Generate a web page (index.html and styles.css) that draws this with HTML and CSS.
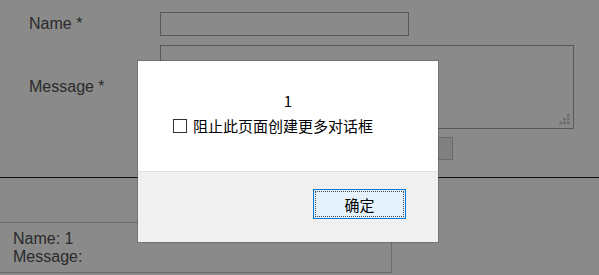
FILE: index.html
```html
<!DOCTYPE html>
<html lang="zh-CN">
<head>
<meta charset="utf-8">
<title>Form</title>
<link rel="stylesheet" href="styles.css">
</head>
<body>
<div class="form">
  <div class="row">
    <label class="label">Name *</label>
    <input class="field" type="text">
  </div>
  <div class="row row-msg">
    <label class="label">Message *</label>
    <div class="area-wrap">
      <textarea class="area"></textarea>
      <svg class="grip" width="12" height="12" viewBox="0 0 12 12">
        <rect x="8" y="0" width="2.6" height="2.6"/>
        <rect x="4.2" y="3.8" width="2.6" height="2.6"/>
        <rect x="8" y="3.8" width="2.6" height="2.6"/>
        <rect x="0.4" y="7.6" width="2.6" height="2.6"/>
        <rect x="4.2" y="7.6" width="2.6" height="2.6"/>
        <rect x="8" y="7.6" width="2.6" height="2.6"/>
      </svg>
    </div>
  </div>
  <div class="actions">
    <button class="submit" type="button">Send</button>
  </div>
</div>
<div class="rule"></div>
<div class="output">
  <div>Name: 1</div>
  <div>Message:</div>
</div>

<div class="dialog">
  <div class="dlg-body">
    <div class="dlg-msg">1</div>
    <div class="dlg-check">
      <span class="box"></span>
      <span>阻止此页面创建更多对话框</span>
    </div>
  </div>
  <div class="dlg-foot">
    <button class="ok" type="button">确定</button>
  </div>
</div>
</body>
</html>
```
FILE: styles.css
```css
html, body {
  margin: 0;
  padding: 0;
}
body {
  background: #898a89;
  font-family: "Liberation Sans", Arial, sans-serif;
  font-size: 16px;
  color: #2b2b2b;
  width: 599px;
  height: 275px;
  overflow: hidden;
}
.form {
  padding: 12px 0 0 29px;
}
.row {
  display: flex;
  align-items: center;
}
.label {
  width: 131px;
  flex: none;
}
.field {
  width: 249px;
  height: 24px;
  box-sizing: border-box;
  border: 1px solid #575857;
  background: transparent;
  margin: 0;
  padding: 0;
}
.row-msg {
  margin-top: 9px;
}
.area-wrap {
  position: relative;
  width: 414px;
  height: 84px;
}
.area {
  display: block;
  width: 414px;
  height: 84px;
  box-sizing: border-box;
  border: 1px solid #575857;
  background: transparent;
  resize: none;
  margin: 0;
  padding: 0;
}
.grip {
  position: absolute;
  right: 3px;
  bottom: 3px;
  fill: #6b6c6b;
}
.actions {
  width: 424px;
  margin-top: 8px;
  display: flex;
  justify-content: flex-end;
}
.submit {
  width: 73px;
  height: 23px;
  box-sizing: border-box;
  border: 1px solid #6a6b6a;
  background: #7f807f;
  color: #1a2a4a;
  font-family: "Liberation Sans", Arial, sans-serif;
  font-size: 13px;
  margin: 0;
  padding: 0;
}
.rule {
  margin-top: 17px;
  border-top: 1px solid #111;
}
.output {
  margin-top: 44px;
  width: 392px;
  box-sizing: border-box;
  border: 1px solid #6d6e6d;
  border-left: none;
  padding: 7px 0 6px 13px;
}
.dialog {
  position: absolute;
  left: 138px;
  top: 61px;
  width: 300px;
  height: 181px;
  box-shadow: 0 0 0 1px rgba(70, 70, 70, 0.35);
  font-family: "Noto Sans CJK SC", "Liberation Sans", sans-serif;
  font-size: 15px;
  color: #000;
}
.dlg-body {
  height: 111px;
  box-sizing: border-box;
  background: #fff;
  padding-top: 30px;
  border-bottom: 1px solid #dfdfdf;
}
.dlg-msg {
  text-align: center;
  line-height: 20px;
}
.dlg-check {
  display: flex;
  align-items: center;
  gap: 6px;
  margin-top: 5px;
  padding-left: 35px;
  line-height: 20px;
}
.box {
  width: 14px;
  height: 14px;
  box-sizing: border-box;
  border: 1px solid #333;
  background: #fff;
  flex: none;
}
.dlg-foot {
  height: 70px;
  box-sizing: border-box;
  background: #f0f0f0;
  display: flex;
  justify-content: flex-end;
  align-items: flex-start;
  padding: 17px 32px 0 0;
}
.ok {
  width: 93px;
  height: 30px;
  box-sizing: border-box;
  border: 1px solid #0078d7;
  background: #e5f1fb;
  outline: 1px dotted #444;
  outline-offset: -3px;
  font-family: "Noto Sans CJK SC", sans-serif;
  font-size: 15px;
  color: #000;
  margin: 0;
  padding: 0;
}
```
